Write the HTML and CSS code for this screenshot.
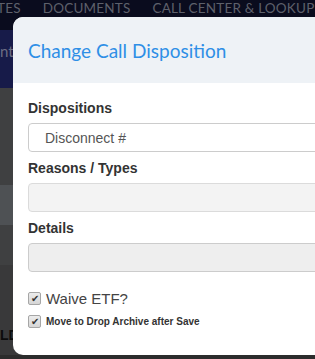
FILE: index.html
```html
<!DOCTYPE html>
<html lang="en">

<head>
  <meta charset="UTF-8">
  <meta name="viewport" content="width=device-width, initial-scale=1.0">
  <title>Change Call Disposition</title>
  <link rel="stylesheet" href="styles.css">
</head>

<body>
  <!-- page behind the dialog -->
  <div class="app">
    <nav class="topnav">
      <span class="nav-item first">TES</span>
      <span class="nav-item">DOCUMENTS</span>
      <span class="nav-item">CALL CENTER &amp; LOOKUP</span>
    </nav>
    <div class="sidebar">
      <div class="side-menu">
        <span>nt</span>
        <span>e</span>
      </div>
      <div class="side-block b1"></div>
      <div class="side-block b2"></div>
      <div class="side-block b3"></div>
      <div class="side-block b4"><span>LD</span></div>
    </div>
  </div>

  <div class="backdrop"></div>

  <div class="modal">
    <div class="modal-header">
      <h4 class="modal-title">Change Call Disposition</h4>
    </div>
    <div class="modal-body">
      <div class="form-group">
        <label>Dispositions</label>
        <select class="form-control">
          <option>Disconnect #</option>
        </select>
      </div>
      <div class="form-group">
        <label>Reasons / Types</label>
        <select class="form-control" disabled></select>
      </div>
      <div class="form-group">
        <label>Details</label>
        <input type="text" class="form-control" disabled>
      </div>

      <div class="checkbox big">
        <input type="checkbox" checked id="waiveEtf">
        <label for="waiveEtf">Waive ETF?</label>
      </div>
      <div class="checkbox small">
        <input type="checkbox" checked id="moveArchive">
        <label for="moveArchive">Move to Drop Archive after Save</label>
      </div>
    </div>
  </div>
</body>

</html>
```

FILE: styles.css
```css
body {
  margin: 0;
  font-family: "Liberation Sans", Arial, sans-serif;
  background-color: #3b3b3b;
  overflow: hidden;
}

.app {
  height: 359px;
}

.topnav {
  height: 30px;
  background-color: #0e1028;
  display: flex;
  white-space: nowrap;
  font-family: Lato, sans-serif;
  font-size: 13.5px;
  letter-spacing: 0.2px;
  color: #7d808f;
  line-height: 17px;
}

.nav-item {
  margin-left: 22px;
}

.nav-item.first {
  margin-left: -3px;
}

.sidebar {
  display: flex;
  flex-direction: column;
}

.side-menu {
  height: 58px;
  background-color: #1f2462;
  color: #8f93b0;
  font-family: Lato, sans-serif;
  font-size: 15px;
  display: flex;
  flex-direction: column;
  gap: 22px;
  padding-top: 12px;
  box-sizing: border-box;
}

.side-block.b1 {
  height: 97px;
  background-color: #555657;
}

.side-block.b2 {
  height: 40px;
  background-color: #696c70;
}

.side-block.b3 {
  height: 40px;
  background-color: #555657;
}

.side-block.b4 {
  height: 90px;
  background-color: #4c4d4e;
  font-weight: bold;
  font-size: 14px;
  color: #111;
  padding-top: 62px;
  box-sizing: border-box;
}

.backdrop {
  position: fixed;
  inset: 0;
  background-color: rgba(0, 0, 0, 0.25);
}

.modal {
  position: fixed;
  left: 13px;
  top: 17px;
  width: 360px;
  height: 338px;
  background-color: #fff;
  border-radius: 10px;
  overflow: hidden;
}

.modal-header {
  height: 66px;
  background-color: #eef2f6;
  padding-left: 15px;
  display: flex;
  align-items: center;
}

.modal-title {
  margin: 0;
  font-family: Lato, sans-serif;
  font-weight: normal;
  font-size: 19px;
  color: #2e8fe6;
}

.modal-body {
  padding: 15px 15px;
}

.form-group {
  margin-bottom: 6px;
}

.form-group label {
  display: block;
  font-weight: bold;
  font-size: 14px;
  line-height: 20px;
  color: #333;
  margin-bottom: 5px;
}

.form-control {
  display: block;
  width: 100%;
  height: 29px;
  box-sizing: border-box;
  border: 1px solid #ccc;
  border-radius: 4px;
  background-color: #fff;
  padding: 0 16px;
  font-family: "Liberation Sans", Arial, sans-serif;
  font-size: 14px;
  color: #555;
  appearance: none;
  -webkit-appearance: none;
}

.form-control:disabled {
  background-color: #eee;
}

.checkbox {
  display: flex;
  align-items: center;
  color: #333;
}

.checkbox input {
  appearance: none;
  -webkit-appearance: none;
  margin: 0 5px 0 0;
  width: 13px;
  height: 13px;
  border: 1px solid #a6a6a6;
  border-radius: 2px;
  background: linear-gradient(#ececec, #d6d6d6);
  box-sizing: border-box;
  display: flex;
  align-items: center;
  justify-content: center;
}

.checkbox input:checked::after {
  content: "\2714";
  font-size: 10px;
  line-height: 10px;
  color: #333;
}

.checkbox.big {
  margin-top: 18px;
  font-size: 15px;
  color: #444;
}

.checkbox.small {
  margin-top: 8px;
  font-size: 10px;
  font-weight: bold;
}
```
